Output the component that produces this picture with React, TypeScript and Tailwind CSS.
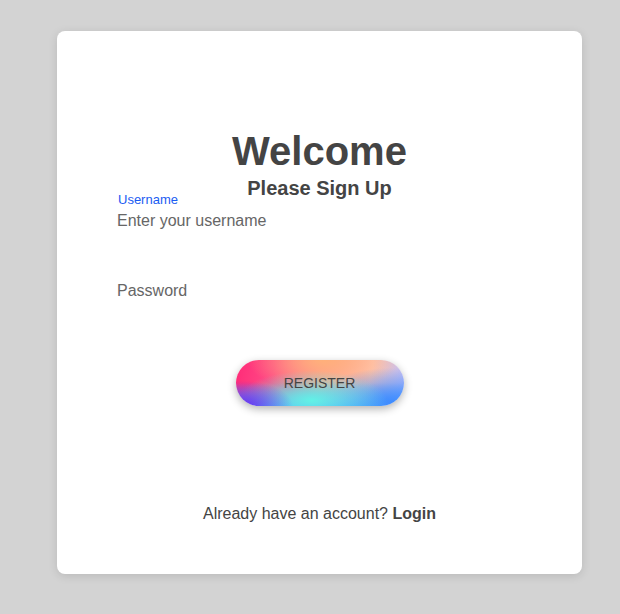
const App = () => {
    return (
        <div className="min-h-[614px] bg-[#d3d3d3] pt-[31px] pl-[57px] font-['Liberation_Sans',Arial,sans-serif]">

            <div className="flex flex-col w-[525px] h-[543px] bg-white rounded-lg shadow-[0_2px_10px_rgba(0,0,0,0.12)] px-[60px] pt-[100px]">

                <h1 className="text-[40px] leading-[40px] font-bold text-center text-[#444]">Welcome</h1>
                <h2 className="mt-[7px] text-[20px] leading-[20px] font-bold text-center text-[#444]">Please Sign Up</h2>

                {/* username */}
                <div className="relative mt-[13px]">
                    <label className="absolute left-[1px] top-[-19px] text-[13px] leading-[16px] text-[#1a5cf2]">Username</label>
                    <input
                        type="text"
                        placeholder="Enter your username"
                        className="block w-full h-[20px] text-[16px] leading-[20px] bg-transparent outline-none text-[#444] placeholder:text-[#666]"
                    />
                </div>

                {/* password */}
                <div className="mt-[50px]">
                    <input
                        type="password"
                        placeholder="Password"
                        className="block w-full h-[20px] text-[16px] leading-[20px] bg-transparent outline-none text-[#444] placeholder:text-[#666]"
                    />
                </div>

                <button className="mt-[59px] mx-auto w-[168px] h-[46px] rounded-full text-[14px] text-[#444] shadow-[0_3px_8px_rgba(0,0,0,0.3)] bg-[image:radial-gradient(ellipse_30%_55%_at_4%_100%,#6a2cf0_0%,transparent_100%),radial-gradient(ellipse_45%_65%_at_45%_88%,#62f2e6_0%,transparent_100%),radial-gradient(ellipse_45%_75%_at_92%_92%,#3f8cff_0%,transparent_100%),radial-gradient(ellipse_45%_70%_at_52%_0%,#ffb07a_0%,transparent_100%),linear-gradient(180deg,transparent_50%,#58a0ff_100%),linear-gradient(100deg,#ff2a78_0%,#ff4c86_22%,#ff9a94_50%,#ffc6b4_78%,#b6bcff_100%)]">
                    REGISTER
                </button>

                <p className="mt-[98px] text-center text-[16px] leading-[20px] text-[#444]">
                    Already have an account? <span className="font-bold">Login</span>
                </p>

            </div>
        </div>
    )
}

export default App
